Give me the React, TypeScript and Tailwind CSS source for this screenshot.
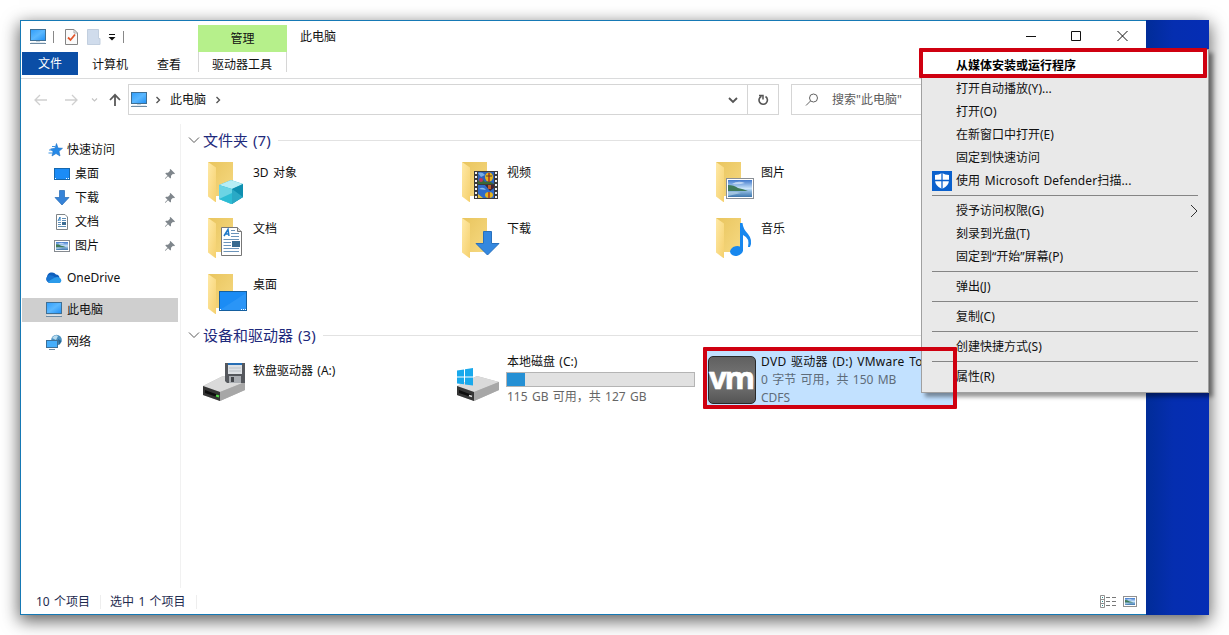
import React from "react";

type IconProps = { className?: string };

function Monitor({ className }: IconProps) {
  return (
    <svg className={className} width="16" height="16" viewBox="0 0 16 16">
      <defs>
        <linearGradient id="mon" x1="0" y1="0" x2="1" y2="1">
          <stop offset="0" stopColor="#2f9dfb" />
          <stop offset="0.5" stopColor="#5bb8ff" />
          <stop offset="1" stopColor="#1f8ff5" />
        </linearGradient>
      </defs>
      <rect x="0.5" y="0.5" width="15" height="11" fill="url(#mon)" stroke="#3f6f94" />
      <rect x="6" y="12" width="4" height="1" fill="#c9d5de" />
      <rect x="1" y="13" width="14" height="0.8" fill="#dfe8ef" />
      <rect x="0" y="14" width="16" height="1" fill="#6d8ba3" />
    </svg>
  );
}

function Folder({ children }: { children?: React.ReactNode }) {
  return (
    <svg className="mt-px block shrink-0" width="42" height="44" viewBox="0 0 42 44">
      <defs>
        <linearGradient id="fback" x1="0" y1="0" x2="1" y2="1">
          <stop offset="0" stopColor="#e9c55e" />
          <stop offset="1" stopColor="#f6d982" />
        </linearGradient>
        <linearGradient id="ffront" x1="0" y1="0" x2="1" y2="1">
          <stop offset="0" stopColor="#ffe9a6" />
          <stop offset="1" stopColor="#f5d06d" />
        </linearGradient>
      </defs>
      <path d="M1 0H26V34H8Z" fill="url(#fback)" />
      <path d="M1 0L9 5.5V39.5Q9 40.500 8 39.8L1 34.5Z" fill="url(#ffront)" />
      {children}
    </svg>
  );
}

function Landscape({ x, y, w, h }: { x: number; y: number; w: number; h: number }) {
  return (
    <svg x={x} y={y} width={w} height={h} viewBox="0 0 24 17" preserveAspectRatio="none">
      <defs>
        <linearGradient id="sky" x1="0" y1="0" x2="0" y2="1">
          <stop offset="0" stopColor="#3f78cc" />
          <stop offset="0.5" stopColor="#c9e4fa" />
          <stop offset="0.65" stopColor="#8fb9e0" />
          <stop offset="1" stopColor="#3e77ad" />
        </linearGradient>
      </defs>
      <rect width="24" height="17" fill="url(#sky)" />
      <path d="M4 4Q10 0 17 3Q11 5 4 4Z" fill="#eef7ff" opacity="0.6" />
      <path d="M0 5Q6 5 10 8Q15 9 20 11H0Z" fill="#3f7a58" />
      <path d="M0 12Q7 11 13 13L0 16Z" fill="#b5d3e8" opacity="0.7" />
    </svg>
  );
}

const Cube = () => (
  <g>
    <path d="M12 23L24 18L36 22V35L24 42L12 37Z" fill="#25b1cc" />
    <path d="M12 23L24 18L36 22L25 27Z" fill="#b7edf5" />
    <path d="M12 23L25 27V42L12 37Z" fill="#6bd4e4" />
    <path d="M25 27L36 22V35L25 42Z" fill="#0f8fb0" />
    <path d="M12 37L25 31V42Z" fill="#2cbcd4" />
    <path d="M25 27L36 35L25 42Z" fill="#2aa9c5" />
  </g>
);
const Film = () => (
  <g>
    <rect x="13" y="9" width="24" height="28" fill="#3b3b3b" />
    {[10, 14, 18, 22, 26, 30, 34].map((y) => (
      <g key={y} fill="#f2f2f2">
        <rect x="14" y={y} width="2" height="2" />
        <rect x="34" y={y} width="2" height="2" />
      </g>
    ))}
    <rect x="17" y="10" width="16" height="12" fill="#2c62bb" />
    <rect x="17" y="23" width="16" height="13" fill="#2f6bca" />
    <path d="M17 11Q21 9.500 24 13L20 15Z" fill="#79aee6" />
    <path d="M17 19Q21 15 24 20L28 19L33 22H17Z" fill="#3b6a35" />
    <ellipse cx="28" cy="15" rx="4" ry="4.500" fill="#e6b51e" />
    <path d="M27.300 11H28.700V20H27.300Z" fill="#a32c20" />
    <path d="M25 14H31" stroke="#5c4424" />
    <ellipse cx="20" cy="18" rx="2" ry="2" fill="#c1345a" />
    <path d="M24 23H33V26L29 29Z" fill="#432632" />
    <path d="M27 23H30V27H27Z" fill="#bd5a26" />
    <ellipse cx="28" cy="33" rx="4" ry="3" fill="#e6b51e" />
    <path d="M27.300 30H28.700V36H27.300Z" fill="#a32c20" />
    <path d="M17 32L22 36H17Z" fill="#e5c03a" />
    <path d="M18 27Q22 24 25 28Z" fill="#8cbbea" />
  </g>
);
const Picture = () => (
  <g>
    <rect x="11.500" y="16.500" width="27" height="20" fill="#fff" stroke="#8a8f96" />
    <Landscape x={13} y={18} w={24} h={17} />
  </g>
);
const DocShape = () => (
  <g>
    <path d="M14.5 9.500H30.500L34.500 13.500V37.500H14.500Z" fill="#fff" stroke="#777" />
    <path d="M30.500 9.500V13.500H34.500" fill="#ddd" stroke="#777" />
    <path d="M17 18L21 11.500L22 18M18.500 16H22" fill="none" stroke="#1e78c8" strokeWidth="1.500" />
    <path d="M24 12.500H28M24 15.500H32M24 18.500H32M16.500 21.500H32M16.500 24.500H24M16.500 27.500H24M16.500 30.500H32M16.500 33.500H32" stroke="#6c94ba" />
    <rect x="25" y="23" width="8" height="6" fill="#38698f" />
  </g>
);
const DownBig = () => (
  <path d="M22.500 13.500H30.500V25.500H38L26.500 37L15 25.500H22.500Z" fill="#3488e0" stroke="#2870bd" />
);
const Note = () => (
  <g fill="#1787ee">
    <ellipse cx="21.500" cy="33" rx="6.500" ry="4.800" transform="rotate(-12 21.500 33)" />
    <path d="M25 5H27.500Q28 11 33 16Q38 22 35 29H33Q35 20 28 17V33H25Z" />
  </g>
);
const Desk = () => (
  <g>
    <rect x="12.500" y="17.500" width="27" height="19" fill="#1b8cf5" stroke="#155f9f" />
    <path d="M13 36L39 19V36Z" fill="#42a3fa" opacity="0.4" />
    <path d="M13 35.500H15M34 35.500H39" stroke="#fff" strokeDasharray="1 1" />
  </g>
);

function Pin() {
  return (
    <svg className="block" width="12" height="12" viewBox="0 0 12 12">
      <path d="M6.500 1L11 5.500L10 6.200L9 5.800L7 7.800L7 9.800L6.300 10.500L4 8.200L1.500 10.800L1 10.800V10.300L3.500 7.700L1.300 5.500L2 4.800H4L6 2.800L5.700 1.800Z" fill="#7f868c" />
    </svg>
  );
}

const StarIcon = () => (
  <svg width="16" height="16" viewBox="0 0 16 16">
    <path d="M8.500 1.500L10 6L14.500 6.300L11 9.300L12 14L8 11.500L4 14L5 9.700L2.500 7L7 6.200Z" fill="#2589e8" stroke="#1c70c4" strokeWidth="0.600" />
    <path d="M1 8H5M0.500 11H4.500M4 4.500H7" stroke="#3b93e3" strokeWidth="1" />
  </svg>
);
const DesktopIcon = () => (
  <svg width="16" height="16" viewBox="0 0 16 16">
    <rect x="0.500" y="2.500" width="15" height="11" fill="#1b8cf7" stroke="#1667ad" />
    <path d="M1 12.500H3M12 12.500H15" stroke="#fff" strokeDasharray="1 1" />
  </svg>
);
const DownIcon = () => (
  <svg width="16" height="16" viewBox="0 0 16 16">
    <path d="M5.500 0.500H10.500V7.500H15L8 15L1 7.500H5.500Z" fill="#3683d8" stroke="#2369b4" strokeWidth="0.700" />
  </svg>
);
const DocIcon = () => (
  <svg width="16" height="16" viewBox="0 0 16 16">
    <path d="M2.500 0.500H11L13.500 3V15.500H2.500Z" fill="#fff" stroke="#7f8487" />
    <path d="M4 7L6 3V7" fill="none" stroke="#2678bd" />
    <path d="M8 4.500H12M8 6.500H12M4 8.500H7M4 10.500H7M4 12.500H12" stroke="#5f8fb8" />
    <rect x="8" y="8" width="4" height="3" fill="#3c6c92" />
  </svg>
);
const PicIcon = () => (
  <svg width="16" height="16" viewBox="0 0 16 16">
    <rect x="0.500" y="2.500" width="15" height="11" fill="#fff" stroke="#858a90" />
    <Landscape x={2} y={4} w={12} h={8} />
  </svg>
);
const CloudIcon = () => (
  <svg width="16" height="16" viewBox="0 0 16 16">
    <path d="M4 13A4 4 0 0 1 1 6.800A5 5 0 0 1 10 4.500A3.800 3.800 0 0 1 13.500 8A2.700 2.700 0 0 1 13 13Z" fill="#0f5fbd" />
    <path d="M3.500 5Q7 5 10 8L5 13H4A4 4 0 0 1 1 7Q2 5 3.500 5Z" fill="#1874d1" />
    <path d="M2 12Q4 10 9 7.500Q12 6.500 13.500 8A2.600 2.600 0 0 1 13.500 13H4Z" fill="#2b9bea" />
  </svg>
);
const NetIcon = () => (
  <svg width="16" height="16" viewBox="0 0 16 16">
    <circle cx="10.500" cy="6" r="5.300" fill="#4b91c0" />
    <path d="M6 4Q9 0 12 2L10 6Z" fill="#b7dbef" />
    <path d="M12 5L15.500 7L13 11Z" fill="#286794" />
    <rect x="0.500" y="6.500" width="11" height="7" fill="#45aefb" stroke="#3b6f98" />
    <path d="M3 15.500H9" stroke="#6d8ba3" />
  </svg>
);

const sidebar = [
  { label: "快速访问", icon: <StarIcon />, row: "pl-[26px]" },
  { label: "桌面", icon: <DesktopIcon />, row: "pl-[32px]", pin: true },
  { label: "下载", icon: <DownIcon />, row: "pl-[32px]", pin: true },
  { label: "文档", icon: <DocIcon />, row: "pl-[32px]", pin: true },
  { label: "图片", icon: <PicIcon />, row: "pl-[32px]", pin: true },
  { label: "OneDrive", icon: <CloudIcon />, row: "mt-2 pl-[24px]" },
  { label: "此电脑", icon: <Monitor />, row: "mt-2 bg-[#cfcfcf] pl-[24px]" },
  { label: "网络", icon: <NetIcon />, row: "mt-2 pl-[24px]" },
];

const folders = [
  { label: "3D 对象", art: <Cube /> },
  { label: "视频", art: <Film /> },
  { label: "图片", art: <Picture /> },
  { label: "文档", art: <DocShape /> },
  { label: "下载", art: <DownBig /> },
  { label: "音乐", art: <Note /> },
  { label: "桌面", art: <Desk /> },
];

function Section({ label }: { label: string }) {
  return (
    <div className="flex h-[22px] items-center">
      <svg width="12" height="8" viewBox="0 0 12 8">
        <path d="M1 1.500L6 6.500L11 1.500" fill="none" stroke="#5a5a5a" />
      </svg>
      <span className="ml-[3px] text-[15px] leading-[22px] text-[#1e2a7c]">{label}</span>
      <span className="ml-[7px] h-px flex-1 bg-[#e2e2e2]" />
    </div>
  );
}

function DriveBody() {
  return (
    <g>
      <path d="M0 24L20 14L42 20V28L17 39L0 33Z" fill="#b9b9b9" />
      <path d="M0 24L20 14L42 20L17 30Z" fill="#dadada" />
      <path d="M17 30L42 20V28L17 39Z" fill="#a7a7a7" />
      <path d="M0 24L17 30V39L0 33Z" fill="#353535" />
      <path d="M2 28L14 32.500V35L2 31Z" fill="#0d0d0d" />
    </g>
  );
}

const FloppyDrive = () => (
  <svg className="block shrink-0" width="43" height="40" viewBox="0 0 43 40">
    <DriveBody />
    <path d="M13 33.500L16 34.500" stroke="#55dc4a" strokeWidth="2" />
    <path d="M22 1H42V21H24L22 19Z" fill="#55585d" />
    <rect x="25" y="1" width="14" height="2" fill="#266eb5" />
    <rect x="25" y="3" width="14" height="9" fill="#dde1e5" />
    <path d="M26 6H38M26 9H38" stroke="#bbc1c7" />
    <rect x="26" y="14" width="12" height="7" fill="#a9adb2" />
    <rect x="28" y="15" width="3" height="5" fill="#43464b" />
  </svg>
);
const WindowsDrive = () => (
  <svg className="block shrink-0" width="43" height="40" viewBox="0 0 43 40">
    <DriveBody />
    <path d="M12 33.500L15 34.500" stroke="#e2e2e2" strokeWidth="1.500" />
    <path d="M0 8.500L7 7.500V14.500H0ZM8 7.300L16 6V14.500H8ZM0 15.500H7V22.300L0 21.500ZM8 15.500H16V23.500L8 22.500Z" fill="#19a9ec" />
  </svg>
);

type Entry = { label: string; sub?: boolean; shield?: boolean };
const menuGroups: Entry[][] = [
  [
    { label: "打开自动播放(Y)..." },
    { label: "打开(O)" },
    { label: "在新窗口中打开(E)" },
    { label: "固定到快速访问" },
    { label: "使用 Microsoft Defender扫描...", shield: true },
  ],
  [{ label: "授予访问权限(G)", sub: true }, { label: "刻录到光盘(T)" }, { label: "固定到“开始”屏幕(P)" }],
  [{ label: "弹出(J)" }],
  [{ label: "复制(C)" }],
  [{ label: "创建快捷方式(S)" }],
  [{ label: "属性(R)" }],
];

function ContextMenu() {
  return (
    <div className="absolute left-[901px] top-[29px] h-[344px] w-[288px] border border-[#a0a0a0] bg-[#e9e9e9] pt-[4px] shadow-[4px_4px_4px_rgba(0,0,0,0.4)]">
      <div className="flex h-[23px] items-center pl-[34px] font-bold">从媒体安装或运行程序</div>
      {menuGroups.map((group, i) => (
        <div key={i}>
          {i > 0 && <div className="ml-[10px] mr-[10px] mt-[3px] mb-[3px] h-px bg-[#858585]" />}
          {group.map((entry) => (
            <div key={entry.label} className="flex h-[23px] items-center pr-[10px]">
              <span className="flex w-[34px] pl-[10px]">
                {entry.shield && (
                  <svg width="20" height="20" viewBox="0 0 20 20">
                    <rect width="20" height="20" fill="#0b61cd" />
                    <path d="M10 2Q13 4 17 4V9Q17 15 10 18Q3 15 3 9V4Q7 4 10 2Z" fill="#fff" />
                    <path d="M10 2V18M3 9.500H17" stroke="#0b61cd" strokeWidth="1.300" />
                  </svg>
                )}
              </span>
              <span className={entry.shield ? "flex-1 tracking-[0.12px]" : "flex-1"}>{entry.label}</span>
              {entry.sub && (
                <svg width="8" height="14" viewBox="0 0 8 14">
                  <path d="M1 1L7 7L1 13" fill="none" stroke="#333" />
                </svg>
              )}
            </div>
          ))}
        </div>
      ))}
    </div>
  );
}

function TitleBar() {
  return (
    <div className="flex h-[58px] shrink-0 border-b border-[#dadbdc]">
      <div className="flex w-[177px] flex-col">
        <div className="flex h-[31px] items-center pl-[9px]">
          <Monitor />
          <span className="ml-[7px] h-[12px] w-px bg-[#888]" />
          <svg className="ml-[11px]" width="13" height="16" viewBox="0 0 13 16">
            <path d="M0.500 0.500H9L12.500 4V15.500H0.500Z" fill="#fafafa" stroke="#848484" />
            <path d="M9 0.500V4H12.500" fill="none" stroke="#aaa" />
            <path d="M3 8.500L5.500 11L10 5.500" fill="none" stroke="#e2562b" strokeWidth="1.800" />
          </svg>
          <svg className="ml-[9px]" width="14" height="16" viewBox="0 0 14 16">
            <path d="M0.500 0.500H11.500V9.500H13V15.500H0.500Z" fill="#d0dcec" stroke="#c2cfdf" />
          </svg>
          <svg className="ml-[7px]" width="8" height="8" viewBox="0 0 8 8">
            <path d="M1 1.500H7" stroke="#111" />
            <path d="M0.500 4H7.500L4 7.500Z" fill="#111" />
          </svg>
          <span className="ml-[7px] h-[12px] w-px bg-[#888]" />
        </div>
        <div className="flex h-[23px] items-center pl-px">
          <span className="flex h-[23px] w-[56px] items-center justify-center bg-[#0b4ea6] pt-px text-white">文件</span>
          <span className="ml-[14px] pt-[2px]">计算机</span>
          <span className="ml-[29px] pt-[2px]">查看</span>
        </div>
      </div>
      <div className="flex w-[89px] flex-col pt-[4px]">
        <div className="flex h-[27px] items-center justify-center bg-[#b6f08b]">管理</div>
        <div className="flex h-[20px] items-center justify-center border-x border-[#d6d6d6] pt-[6px] pr-px">驱动器工具</div>
      </div>
      <div className="flex h-[31px] flex-1 items-center pl-[13px]">
        <span>此电脑</span>
        <svg className="mr-[18px] mb-[2px] ml-auto" width="102" height="12" viewBox="0 0 102 12">
          <path d="M0 6.500H10M45.500 1.500H54.500V10.500H45.500ZM91.500 1L101.500 11M101.500 1L91.500 11" fill="none" stroke="#111" />
        </svg>
      </div>
    </div>
  );
}

function AddressBar() {
  return (
    <div className="flex h-[45px] shrink-0 pt-[5px]">
      <div className="flex h-[31px] w-[107px] items-center pl-[13px]">
        <svg width="14" height="12" viewBox="0 0 14 12"><path d="M13 6H1.500M6 1L1 6L6 11" fill="none" stroke="#cfcfcf" strokeWidth="1.300" /></svg>
        <svg className="ml-[16px]" width="14" height="12" viewBox="0 0 14 12"><path d="M1 6H12.500M8 1L13 6L8 11" fill="none" stroke="#cfcfcf" strokeWidth="1.300" /></svg>
        <svg className="ml-[13px]" width="7" height="6" viewBox="0 0 7 6"><path d="M1 1.500L3.500 4L6 1.500" fill="none" stroke="#c4c4c4" strokeWidth="1.200" /></svg>
        <svg className="ml-[10px]" width="14" height="14" viewBox="0 0 14 14"><path d="M7 13V2M2 7L7 1.800L12 7" fill="none" stroke="#595959" strokeWidth="1.800" /></svg>
      </div>
      <div className="flex h-[31px] w-[651px] border border-[#d5d5d5]">
        <div className="flex flex-1 items-center pl-[2px]">
          <Monitor />
          <svg className="ml-[8px]" width="6" height="8" viewBox="0 0 6 8"><path d="M1.500 1L4.500 4L1.500 7" fill="none" stroke="#555" strokeWidth="1.400" /></svg>
          <span className="ml-[9px]">此电脑</span>
          <svg className="ml-[9px]" width="6" height="8" viewBox="0 0 6 8"><path d="M1.500 1L4.500 4L1.500 7" fill="none" stroke="#555" strokeWidth="1.400" /></svg>
          <svg className="mr-[9px] ml-auto" width="10" height="8" viewBox="0 0 10 8"><path d="M1 2L5 6L9 2" fill="none" stroke="#555" strokeWidth="1.800" /></svg>
        </div>
        <div className="flex w-[31px] items-center justify-center border-l border-[#d5d5d5]">
          <svg width="12" height="14" viewBox="0 0 12 14">
            <path d="M8.500 3.500A4.200 4.200 0 1 1 4.500 3.200" fill="none" stroke="#555" strokeWidth="1.600" />
            <path d="M2 2.500H6V6.500" fill="none" stroke="#555" strokeWidth="1.500" />
          </svg>
        </div>
      </div>
      <div className="ml-[12px] flex h-[31px] flex-1 items-center border border-[#d5d5d5] pl-[13px] text-[#5c5c5c]">
        <svg width="14" height="14" viewBox="0 0 14 14"><circle cx="8.500" cy="5" r="4" fill="none" stroke="#626262" /><path d="M5.500 8L1 12.500" stroke="#626262" /></svg>
        <span className="ml-[13px]">搜索"此电脑"</span>
      </div>
    </div>
  );
}

export default function App() {
  return (
    <div className="h-[635px] w-[1229px] overflow-hidden bg-white p-5 font-['Noto_Sans','Noto_Sans_CJK_SC',sans-serif] text-[12px] leading-[18px] whitespace-nowrap text-[#111] [word-spacing:1.2px]">
      <div className="relative flex h-[595px] w-[1189px] bg-[linear-gradient(90deg,#002c96_94.5%,#052eb0_97%,#052db5)] shadow-[0_5px_16px_1px_rgba(0,0,0,0.62)]">
        <div className="flex h-[595px] w-[1126px] flex-col border border-r-0 border-[#1679b5] bg-white">
          <TitleBar />
          <AddressBar />
          <div className="flex min-h-0 flex-1">
            <div className="flex w-[160px] shrink-0 flex-col border-r border-[#f1f1f1] pt-[14px] pl-px">
              {sidebar.map((s) => (
                <div key={s.label} className={"flex h-[24px] w-[156px] shrink-0 items-center " + s.row}>
                  {s.icon}
                  <span className={s.label === "快速访问" ? "ml-[3px]" : "ml-[5px]"}>{s.label}</span>
                  {s.pin && <span className="mr-[2px] ml-auto"><Pin /></span>}
                </div>
              ))}
            </div>
            <div className="flex flex-1 flex-col pt-[5px] pl-[7px]">
              <Section label="文件夹 (7)" />
              <div className="grid auto-rows-[56px] grid-cols-[254px_254px_254px] pt-[10px] pl-[19px]">
                {folders.map((f) => (
                  <div key={f.label} className="flex">
                    <Folder>{f.art}</Folder>
                    <span className="ml-[4px] pt-[3px]">{f.label}</span>
                  </div>
                ))}
              </div>
              <div className="-mt-[5px]"><Section label="设备和驱动器 (3)" /></div>
              <div className="mt-px flex h-[62px] pl-[15px]">
                <div className="flex w-[254px] pt-[15px]">
                  <FloppyDrive />
                  <span className="ml-[7px]">软盘驱动器 (A:)</span>
                </div>
                <div className="flex w-[247px] pt-[15px]">
                  <WindowsDrive />
                  <div className="-mt-[9px] ml-[6px]">
                    <div className="h-[18px] pl-px">本地磁盘 (C:)</div>
                    <div className="mt-px h-[15px] w-[189px] border border-[#b4b4b4] bg-[#e1e1e1]">
                      <div className="h-[13px] w-[18px] bg-[#2590d4]" />
                    </div>
                    <div className="pt-px pl-px text-[#666]">115 GB 可用，共 127 GB</div>
                  </div>
                </div>
                <div className="mt-[2px] flex h-[60px] w-[251px] items-center bg-[#c2e1ff] pl-[4px]">
                  <div className="mt-[2px] flex h-[48px] w-[48px] items-center justify-center rounded-[5px] border border-[#292929] bg-linear-to-b from-[#606060] via-[#777] to-[#555] text-[31px] font-bold tracking-[-2px] text-white">
                    <span className="-mt-[6px] ml-[-2px] [-webkit-text-stroke:0.6px_white]">vm</span>
                  </div>
                  <div className="ml-[5px] h-[54px] pt-px">
                    <div className="w-[160px] overflow-hidden tracking-[0.27px]">DVD 驱动器 (D:) VMware Tools</div>
                    <div className="text-[#5e6c79]">0 字节 可用，共 150 MB</div>
                    <div className="text-[#5e6c79]">CDFS</div>
                  </div>
                </div>
              </div>
            </div>
          </div>
          <div className="flex h-[26px] shrink-0 items-center pt-px pl-[15px] text-[#1e2b4f]">
            <span>10 个项目</span>
            <span className="ml-[10px] h-[14px] w-px bg-[#eee]" />
            <span className="ml-[9px]">选中 1 个项目</span>
            <span className="ml-[10px] h-[14px] w-px bg-[#eee]" />
            <svg className="mr-[7px] mb-px ml-auto" width="16" height="13" viewBox="0 0 16 13">
              <path d="M0.500 0.500H4.500V12.500H0.500ZM0.500 4.500H4.500M0.500 8.500H4.500" fill="#fff" stroke="#909090" />
              <path d="M6 2.500H16M6 6.500H16M6 10.500H16" stroke="#777" strokeDasharray="4 2" />
              <path d="M2 2.500H3M2 6.500H3M2 10.500H3" stroke="#258d8d" />
            </svg>
            <svg className="mr-[9px] mb-px" width="14" height="11" viewBox="0 0 14 11">
              <rect x="0.500" y="0.500" width="13" height="10" fill="#fff" stroke="#909090" />
              <Landscape x={2} y={2} w={10} h={7} />
            </svg>
          </div>
        </div>
        <ContextMenu />
        <div className="absolute top-[327px] left-[683px] h-[62px] w-[254px] rounded-[1px] border-4 border-[#cf0010]" />
        <div className="absolute top-[28px] left-[899px] flex h-[30px] w-[288px] items-center rounded-[1px] border-4 border-[#cf0010] bg-white pl-[33px] font-bold text-black">
          <span className="pt-[5px]">从媒体安装或运行程序</span>
        </div>
      </div>
    </div>
  );
}
